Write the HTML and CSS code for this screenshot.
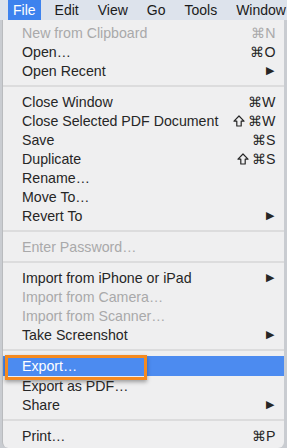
FILE: index.html
```html
<!DOCTYPE html>
<html lang="en">
<head>
  <meta charset="UTF-8">
  <title>File Menu</title>
  <link rel="stylesheet" href="styles.css">
</head>
<body>
  <div class="menubar">
    <span class="menubar-item active">File</span>
    <span class="menubar-item">Edit</span>
    <span class="menubar-item">View</span>
    <span class="menubar-item">Go</span>
    <span class="menubar-item">Tools</span>
    <span class="menubar-item">Window</span>
  </div>

  <div class="menu">
    <div class="menu-item disabled"><span>New from Clipboard</span><span class="key">⌘N</span></div>
    <div class="menu-item"><span>Open…</span><span class="key">⌘O</span></div>
    <div class="menu-item"><span>Open Recent</span><span class="arrow">▶</span></div>
    <div class="separator"></div>
    <div class="menu-item"><span>Close Window</span><span class="key">⌘W</span></div>
    <div class="menu-item"><span>Close Selected PDF Document</span><span class="key"><svg class="shift" viewBox="0 0 12 12"><path d="M6 1 L11 6.2 H8.2 V11 H3.8 V6.2 H1 Z"/></svg>⌘W</span></div>
    <div class="menu-item"><span>Save</span><span class="key">⌘S</span></div>
    <div class="menu-item"><span>Duplicate</span><span class="key"><svg class="shift" viewBox="0 0 12 12"><path d="M6 1 L11 6.2 H8.2 V11 H3.8 V6.2 H1 Z"/></svg>⌘S</span></div>
    <div class="menu-item"><span>Rename…</span></div>
    <div class="menu-item"><span>Move To…</span></div>
    <div class="menu-item"><span>Revert To</span><span class="arrow">▶</span></div>
    <div class="separator"></div>
    <div class="menu-item disabled"><span>Enter Password…</span></div>
    <div class="separator"></div>
    <div class="menu-item"><span>Import from iPhone or iPad</span><span class="arrow">▶</span></div>
    <div class="menu-item disabled"><span>Import from Camera…</span></div>
    <div class="menu-item disabled"><span>Import from Scanner…</span></div>
    <div class="menu-item"><span>Take Screenshot</span><span class="arrow">▶</span></div>
    <div class="separator"></div>
    <div class="menu-item selected"><span>Export…</span><span class="callout"></span></div>
    <div class="menu-item"><span>Export as PDF…</span></div>
    <div class="menu-item"><span>Share</span><span class="arrow">▶</span></div>
    <div class="separator"></div>
    <div class="menu-item"><span>Print…</span><span class="key">⌘P</span></div>
  </div>
</body>
</html>
```

FILE: styles.css
```css
body {
  margin: 0;
  width: 287px;
  height: 448px;
  overflow: hidden;
  background: #c9ccd1;
  font-family: "Liberation Sans", Arial, sans-serif;
  color: #262626;
}

.menubar {
  display: flex;
  gap: 9px;
  height: 20px;
  padding-left: 8px;
  background: #dde3ec;
  font-size: 14px;
  line-height: 20px;
  white-space: nowrap;
}
.menubar-item { padding: 0 5px; color: #1a1a1a; }
.menubar-item.active { background: #3d82ee; color: #fff; }

.menu {
  margin: 0 3px 0 2px;
  height: 428px;
  padding-top: 3px;
  box-sizing: border-box;
  background: #efeff0;
  border-left: 1px solid #b9bbbe;
  border-radius: 0 0 6px 6px;
  font-size: 14.2px;
}

.menu-item {
  position: relative;
  display: flex;
  justify-content: space-between;
  align-items: center;
  height: 19px;
  padding: 0 8px 0 19px;
  white-space: nowrap;
}
.menu-item.disabled { color: #a9a9aa; }
.menu-item.selected { background: #4c8bf0; color: #fff; height: 20px; }

.key { display: flex; align-items: center; letter-spacing: 0.5px; }
.shift {
  width: 12px;
  height: 12px;
  margin-right: 3px;
  fill: none;
  stroke: currentColor;
  stroke-width: 1.2;
  stroke-linejoin: round;
}
.arrow { font-size: 11px; padding-right: 2px; }

.separator {
  height: 2px;
  margin: 5px 0;
  background: #dcdcdd;
}

.callout {
  position: absolute;
  left: 2px;
  top: -1px;
  width: 136px;
  height: 19px;
  border: 3px solid #f58a1f;
  box-shadow: 0 2px 4px rgba(0,0,0,0.35);
}
```
